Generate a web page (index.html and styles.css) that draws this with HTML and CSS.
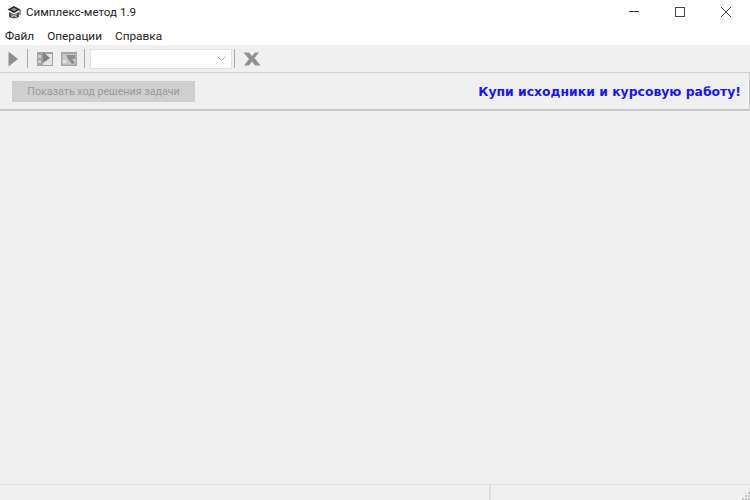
FILE: index.html
```html
<!DOCTYPE html>
<html lang="ru">
<head>
<meta charset="utf-8">
<title>Симплекс-метод 1.9</title>
<link rel="stylesheet" href="styles.css">
</head>
<body>
<div class="window">
  <header class="titlebar">
    <svg class="app-icon" width="16" height="16" viewBox="0 0 16 16">
      <path d="M1.500 5.500 L8 2 L14.500 5.500 L8 9 Z" fill="#2b2b2b"/>
      <path d="M3 8 V13 Q8 15.500 13 13 V8 L8 10.500 Z" fill="#4a4a4a"/>
      <path d="M5 5.500 L8 4 L11 5.500 L8 7 Z" fill="#a0a0a0"/>
      <path d="M14 6 V11" stroke="#333" stroke-width="1"/>
      <path d="M5 10.500 L11 13 M11 10.500 L5 13" stroke="#c4c4c4" stroke-width="1"/>
    </svg>
    <span class="title">Симплекс-метод 1.9</span>
    <div class="controls">
      <span class="ctl"><svg width="12" height="12" viewBox="0 0 12 12"><path d="M1 5.500H11" stroke="#333" stroke-width="1"/></svg></span>
      <span class="ctl"><svg width="12" height="12" viewBox="0 0 12 12"><rect x="1.500" y="1.500" width="9" height="9" fill="none" stroke="#444" stroke-width="1"/></svg></span>
      <span class="ctl"><svg width="12" height="12" viewBox="0 0 12 12"><path d="M1 1L11 11M11 1L1 11" stroke="#444" stroke-width="1"/></svg></span>
    </div>
  </header>
  <nav class="menubar">
    <span class="menu-item">Файл</span>
    <span class="menu-item">Операции</span>
    <span class="menu-item">Справка</span>
  </nav>
  <div class="toolbar">
    <svg class="tool tool-play" width="11" height="16" viewBox="0 0 11 16"><path d="M0.500 0.500 L10 8 L0.500 15.500 Z" fill="#8f8f8f"/></svg>
    <span class="sep"></span>
    <svg class="tool" width="16" height="14" viewBox="0 0 16 14">
      <rect x="0" y="0" width="16" height="14" fill="#a3a3a3"/>
      <rect x="1" y="3" width="3" height="3" fill="#cfcfcf"/>
      <rect x="1" y="8" width="3" height="3" fill="#cfcfcf"/>
      <rect x="6" y="2" width="9" height="11" fill="#e4e4e4"/>
      <path d="M6 0 L13 6 L6 11 Z" fill="#808080"/>
    </svg>
    <svg class="tool tool-two" width="16" height="14" viewBox="0 0 16 14">
      <rect x="0" y="0" width="16" height="14" fill="#a6a6a6"/>
      <rect x="1.500" y="2" width="13" height="10.500" fill="#cacaca"/>
      <path d="M5 3 H14 V7 L11 7 L14 11 L11 12 L7 7 Z" fill="#8e8e8e"/>
      <rect x="2" y="8" width="3" height="3" fill="#e4e4e4"/>
    </svg>
    <span class="sep sep-mid"></span>
    <div class="combo">
      <svg width="9" height="6" viewBox="0 0 9 6"><path d="M0.500 0.500 L4.500 4.500 L8.500 0.500" fill="none" stroke="#a8a8a8" stroke-width="1"/></svg>
    </div>
    <span class="sep sep-last"></span>
    <svg class="tool tool-x" width="18" height="14" viewBox="0 0 18 14">
      <path d="M0.500 0.500 L6 0.500 L9 4 L12 0.500 L16 0.500 L11.500 6 L17.500 13.500 L12 13.500 L9 9.500 L6 13.500 L1 13.500 L6 7 Z" fill="#919191"/>
    </svg>
  </div>
  <div class="panel">
    <button class="solve-btn" disabled>Показать ход решения задачи</button>
    <span class="promo">Купи исходники и курсовую работу!</span>
  </div>
  <main class="content"></main>
  <footer class="statusbar">
    <div class="status-left"></div>
    <div class="status-right">
      <svg class="grip" width="8" height="8" viewBox="0 0 8 8" aria-hidden="true">
        <rect x="6" y="0" width="2" height="2" fill="#c4c4c4"/>
        <rect x="3" y="3" width="2" height="2" fill="#c4c4c4"/>
        <rect x="6" y="3" width="2" height="2" fill="#c4c4c4"/>
        <rect x="0" y="6" width="2" height="2" fill="#c4c4c4"/>
        <rect x="3" y="6" width="2" height="2" fill="#c4c4c4"/>
        <rect x="6" y="6" width="2" height="2" fill="#c4c4c4"/>
      </svg>
    </div>
  </footer>
</div>
</body>
</html>
```
FILE: styles.css
```css
html, body {
  margin: 0;
  padding: 0;
  height: 100%;
  overflow: hidden;
}
body {
  font-family: Roboto, "Noto Sans", "Liberation Sans", sans-serif;
  font-size: 12px;
  color: #1a1a1a;
  background: #f0f0f0;
}
.window {
  display: flex;
  flex-direction: column;
  height: 500px;
  width: 750px;
}
.titlebar {
  display: flex;
  align-items: center;
  height: 23px;
  padding-left: 6px;
  background: #fff;
  flex: none;
}
.app-icon {
  flex: none;
  margin-right: 4px;
}
.title {
  font-size: 11.6px;
  color: #222;
}
.controls {
  display: flex;
  margin-left: auto;
  margin-right: 1px;
}
.ctl {
  display: flex;
  align-items: center;
  justify-content: center;
  width: 46px;
  height: 23px;
}
.menubar {
  display: flex;
  align-items: center;
  gap: 13px;
  height: 22px;
  padding: 3px 0 0 5px;
  box-sizing: border-box;
  background: #fff;
  flex: none;
  font-size: 11.8px;
  font-weight: 400;
  color: #222;
}
.toolbar {
  display: flex;
  align-items: center;
  height: 27px;
  box-sizing: border-box;
  padding-left: 8px;
  background: #f0f0f0;
  flex: none;
}
.tool {
  flex: none;
}
.tool-play {
  margin-right: 8px;
}
.tool-two {
  margin-left: 8px;
}
.tool-x {
  margin-left: 8px;
}
.sep {
  width: 1px;
  height: 19px;
  margin-right: 9px;
  background: #a9a9a9;
  flex: none;
}
.sep-mid {
  margin: 0 5px 0 7px;
}
.sep-last {
  margin: 0 0 0 2px;
}
.combo {
  display: flex;
  align-items: center;
  justify-content: flex-end;
  width: 142px;
  height: 20px;
  padding-right: 5px;
  box-sizing: border-box;
  background: #fff;
  border: 1px solid #e2e2e2;
}
.panel {
  display: flex;
  align-items: center;
  justify-content: space-between;
  height: 39px;
  box-sizing: border-box;
  padding: 1px 8px 0 12px;
  border-top: 1px solid #cfcfcf;
  border-bottom: 2px solid #c8c8c8;
  border-right: 1px solid #c8c8c8;
  flex: none;
}
.solve-btn {
  width: 183px;
  height: 21px;
  margin: 0;
  padding: 0;
  font: inherit;
  font-size: 10.7px;
  color: #9a9a9a;
  background: #cfcfcf;
  border: 1px solid #cdcdcd;
}
.promo {
  font-family: "DejaVu Sans", sans-serif;
  font-size: 12.4px;
  font-weight: 700;
  color: #1414ff;
  white-space: nowrap;
}
.content {
  flex: 1;
  background: #f0f0f0;
}
.statusbar {
  display: flex;
  height: 16px;
  border-top: 1px solid #e2e2e2;
  box-sizing: border-box;
  flex: none;
}
.status-left {
  width: 489px;
  border-right: 2px solid #e0e0e0;
  flex: none;
}
.status-right {
  display: flex;
  flex: 1;
  justify-content: flex-end;
  align-items: flex-end;
}
```
